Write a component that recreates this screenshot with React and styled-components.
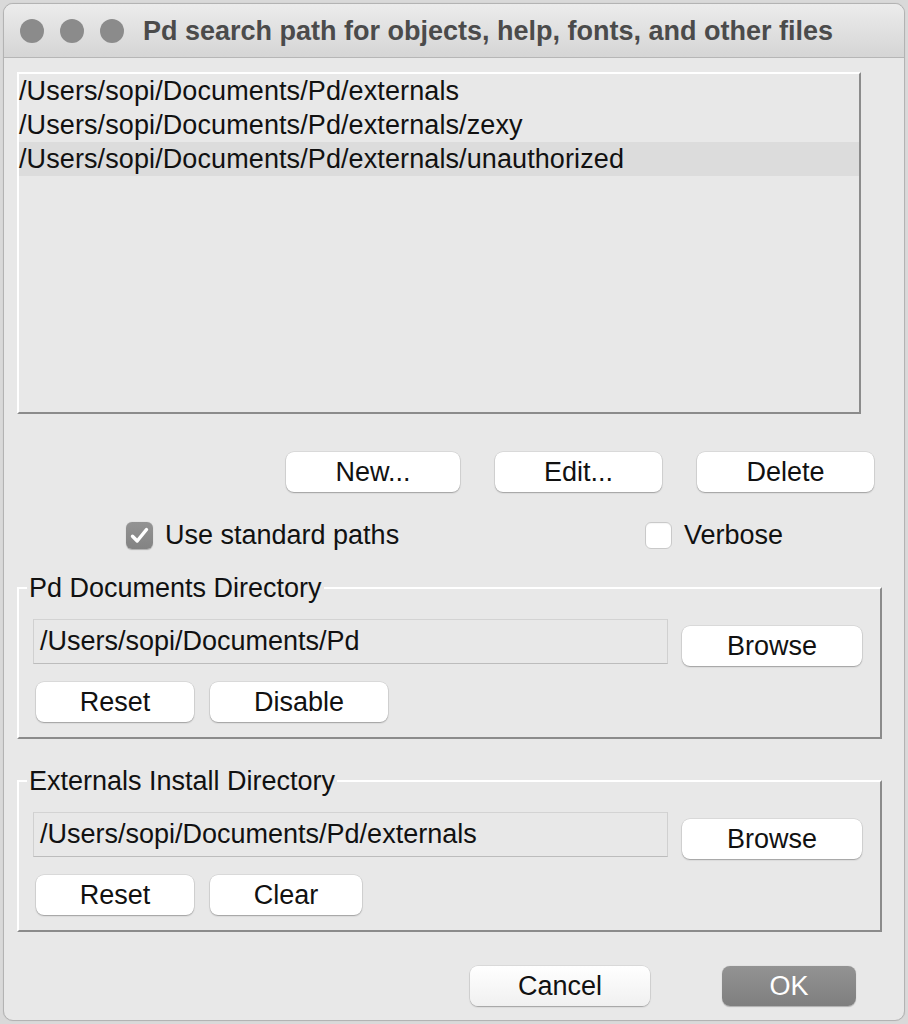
import React from "react";
import styled, { createGlobalStyle } from "styled-components";

const Global = createGlobalStyle`
  html, body { margin: 0; padding: 0; }
  body {
    background: #d9d9d9;
    font-family: "Liberation Sans", Arial, Helvetica, sans-serif;
    -webkit-font-smoothing: antialiased;
  }
  #root { padding: 3px; }
  * { box-sizing: border-box; }
`;

const Window = styled.div`
  width: 902px;
  background: #e8e8e8;
  border: 1px solid #b3b3b3;
  border-radius: 10px;
  overflow: hidden;
  display: flex;
  flex-direction: column;
  padding-bottom: 14px;
  box-shadow: 0 0 1px rgba(0,0,0,0.15);
`;

const TitleBar = styled.div`
  height: 54px;
  display: flex;
  align-items: center;
  padding-left: 16px;
  background: linear-gradient(#ececec, #d5d5d5);
  border-bottom: 1px solid #b6b6b6;
`;

const Light = styled.span`
  width: 24px;
  height: 24px;
  border-radius: 50%;
  background: #8b8b8b;
  margin-right: 16px;
  flex: none;
`;

const Title = styled.div`
  margin-left: 3px;
  margin-top: 2px;
  font-size: 27px;
  font-weight: bold;
  color: #4b4b4b;
  white-space: nowrap;
`;

const Content = styled.div`
  display: flex;
  flex-direction: column;
  padding-left: 13px;
`;

const ListBox = styled.div`
  margin-top: 14px;
  width: 844px;
  height: 342px;
  border-top: 2px solid #ffffff;
  border-left: 2px solid #ffffff;
  border-right: 2px solid #8b8b8b;
  border-bottom: 2px solid #8b8b8b;
  background: #e8e8e8;
  display: flex;
  flex-direction: column;
`;

const ListRow = styled.div`
  height: 34px;
  line-height: 34px;
  font-size: 27px;
  letter-spacing: 0.1px;
  color: #111;
  background: ${(p) => (p.$selected ? "#dcdcdc" : "transparent")};
  white-space: nowrap;
`;

const Row = styled.div`
  display: flex;
  align-items: center;
  gap: ${(p) => p.$gap || 0}px;
  justify-content: ${(p) => p.$justify || "flex-start"};
  margin-top: ${(p) => p.$mt || 0}px;
  padding-right: ${(p) => p.$pr || 0}px;
  padding-left: ${(p) => p.$pl || 0}px;
`;

const Button = styled.button`
  width: ${(p) => p.$w}px;
  height: 40px;
  flex: none;
  border: none;
  border-radius: 8px;
  background: ${(p) =>
    p.$default
      ? "linear-gradient(#939393, #7f7f7f)"
      : p.$soft
      ? "linear-gradient(#ffffff, #f0f0f0)"
      : "#ffffff"};
  color: ${(p) => (p.$default ? "#ffffff" : "#111")};
  box-shadow: ${(p) =>
    p.$default
      ? "0 0.5px 1px rgba(0,0,0,0.25)"
      : "0 0 0 0.5px rgba(0,0,0,0.12), 0 1px 1.5px rgba(0,0,0,0.28)"};
  font-family: "Liberation Sans", Arial, sans-serif;
  font-size: 27px;
  padding: 0;
  margin-top: ${(p) => p.$mt || 0}px;
  margin-left: ${(p) => p.$ml || 0}px;
`;

const CheckGroup = styled.label`
  display: flex;
  align-items: center;
  width: ${(p) => (p.$w ? `${p.$w}px` : "auto")};
  font-size: 27px;
  color: #111;
`;

const Box = styled.span`
  width: 27px;
  height: 27px;
  border-radius: 6px;
  flex: none;
  margin-right: 12px;
  display: flex;
  align-items: center;
  justify-content: center;
  background: ${(p) => (p.$checked ? "linear-gradient(#939393, #838383)" : "#ffffff")};
  border: ${(p) => (p.$checked ? "none" : "1px solid #c9c9c9")};
  box-shadow: ${(p) => (p.$checked ? "0 0.5px 1px rgba(0,0,0,0.25)" : "inset 0 1px 1px rgba(0,0,0,0.04)")};
`;

const Group = styled.fieldset`
  margin: ${(p) => p.$mt}px 0 0 0;
  width: 865px;
  padding: 17px 18px 15px 14px;
  border-top: 2px solid #ffffff;
  border-left: 2px solid #ffffff;
  border-right: 2px solid #8b8b8b;
  border-bottom: 2px solid #8b8b8b;
  border-radius: 0;
  display: flex;
  flex-direction: column;
  gap: 16px;
`;

const Legend = styled.legend`
  font-size: 27px;
  line-height: 28px;
  color: #111;
  padding: 0 2px;
  margin-left: -6px;
`;

const Entry = styled.div`
  width: 635px;
  height: 45px;
  flex: none;
  background: #e8e8e8;
  border-top: 1px solid #d3d3d3;
  border-left: 1px solid #d0d0d0;
  border-right: 1px solid #d0d0d0;
  border-bottom: 1px solid #bcbcbc;
  font-size: 27px;
  color: #111;
  display: flex;
  align-items: center;
  padding-left: 6px;
  white-space: nowrap;
`;

const EntryRow = styled.div`
  display: flex;
  align-items: flex-start;
  gap: 14px;
`;

const Check = () => (
  <svg width="19" height="17" viewBox="0 0 19 17">
    <path d="M2.5 9.2 L7.2 14 L16.5 2.5" fill="none" stroke="#fff" strokeWidth="3.4" strokeLinecap="round" strokeLinejoin="round" />
  </svg>
);

const DirGroup = ({ legend, path, mt, second }) => (
  <Group $mt={mt}>
    <Legend>{legend}</Legend>
    <EntryRow>
      <Entry>{path}</Entry>
      <Button $w={180} $mt={7}>Browse</Button>
    </EntryRow>
    <Row $gap={16}>
      <Button $w={158} $ml={3}>Reset</Button>
      <Button $w={second.w}>{second.label}</Button>
    </Row>
  </Group>
);

export default function App() {
  return (
    <>
      <Global />
      <Window>
        <TitleBar>
          <Light />
          <Light />
          <Light />
          <Title>Pd search path for objects, help, fonts, and other files</Title>
        </TitleBar>
        <Content>
          <ListBox>
            <ListRow>/Users/sopi/Documents/Pd/externals</ListRow>
            <ListRow>/Users/sopi/Documents/Pd/externals/zexy</ListRow>
            <ListRow $selected>/Users/sopi/Documents/Pd/externals/unauthorized</ListRow>
          </ListBox>
          <Row $mt={38} $justify="flex-end" $pr={30} $gap={35}>
            <Button $w={174}>New...</Button>
            <Button $w={167}>Edit...</Button>
            <Button $w={177}>Delete</Button>
          </Row>
          <Row $mt={28} $pl={109}>
            <CheckGroup $w={519}>
              <Box $checked><Check /></Box>
              Use standard paths
            </CheckGroup>
            <CheckGroup>
              <Box />
              Verbose
            </CheckGroup>
          </Row>
          <DirGroup
            mt={23}
            legend="Pd Documents Directory"
            path="/Users/sopi/Documents/Pd"
            second={{ w: 178, label: "Disable" }}
          />
          <DirGroup
            mt={28}
            legend="Externals Install Directory"
            path="/Users/sopi/Documents/Pd/externals"
            second={{ w: 152, label: "Clear" }}
          />
          <Row $mt={34} $justify="flex-end" $pr={48} $gap={72}>
            <Button $w={180} $soft>Cancel</Button>
            <Button $w={134} $default>OK</Button>
          </Row>
        </Content>
      </Window>
    </>
  );
}
